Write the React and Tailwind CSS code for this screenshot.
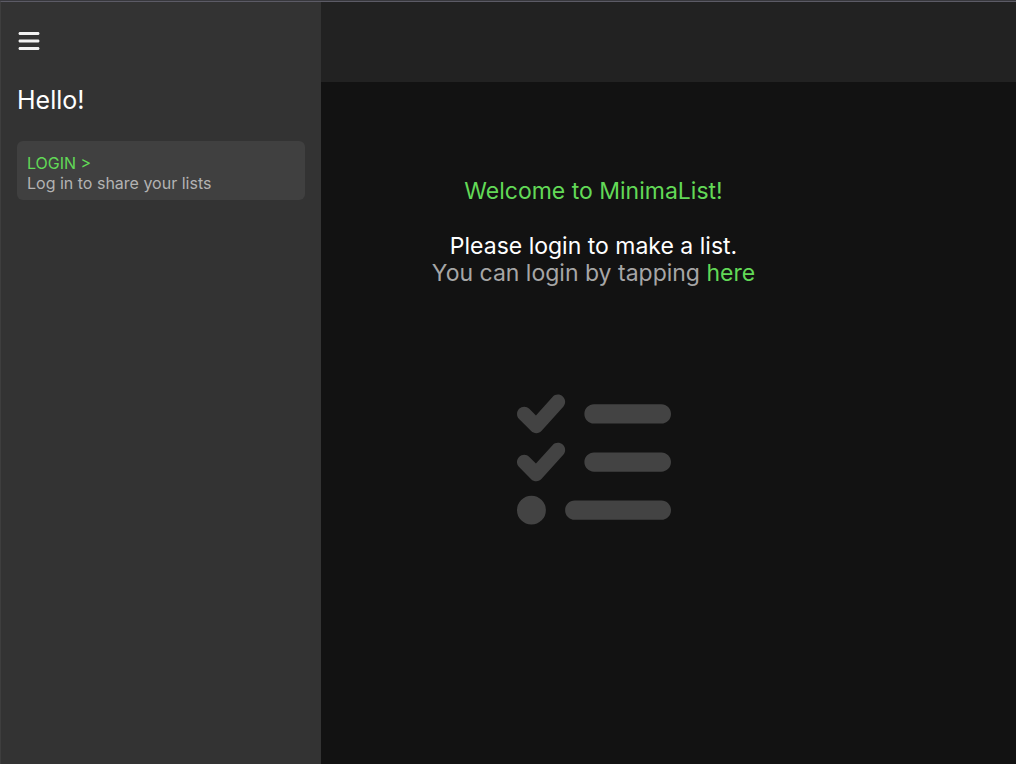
import { FaBars, FaListCheck } from "react-icons/fa6";

function Sidebar() {
  return (
    <aside className="flex w-80 shrink-0 flex-col bg-[#333333] px-4 pt-[27px]">
      <button type="button" aria-label="Toggle menu" className="flex w-6 justify-center text-[#f2f2f2]">
        <FaBars className="h-6 w-6 shrink-0" />
      </button>
      <h1 className="mt-[31px] text-[25px] leading-8 text-white">Hello!</h1>
      <a href="#login" className="mt-[25px] block rounded-md bg-[#404040] px-2.5 pt-3 pb-[7px] text-base leading-5">
        <span className="block text-[#62d957]">LOGIN &gt;</span>
        <span className="block text-[#b3b3b3]">Log in to share your lists</span>
      </a>
    </aside>
  );
}

function Welcome() {
  return (
    <section className="flex flex-col items-center pt-24 pr-[150px] text-center text-[23px] leading-[27px]">
      <h2 className="text-[#62d957]">Welcome to MinimaList!</h2>
      <p className="mt-7 text-white">Please login to make a list.</p>
      <p className="text-[#a6a6a6]">
        You can login by tapping{" "}
        <a href="#login" className="text-[#62d957]">here</a>
      </p>
      <FaListCheck aria-hidden="true" className="mt-[98px] h-[154px] w-[154px] text-[#434343]" />
    </section>
  );
}

export default function App() {
  return (
    <div className="flex min-h-screen flex-col border-t border-[#38383d] bg-[#121212] font-['Inter',sans-serif]">
      <div className="flex grow border-t border-l border-t-[#5c5b66] border-l-[#3e3e3e]">
        <Sidebar />
        <main className="grow">
          <header className="h-20 bg-[#222222]" />
          <Welcome />
        </main>
      </div>
    </div>
  );
}
